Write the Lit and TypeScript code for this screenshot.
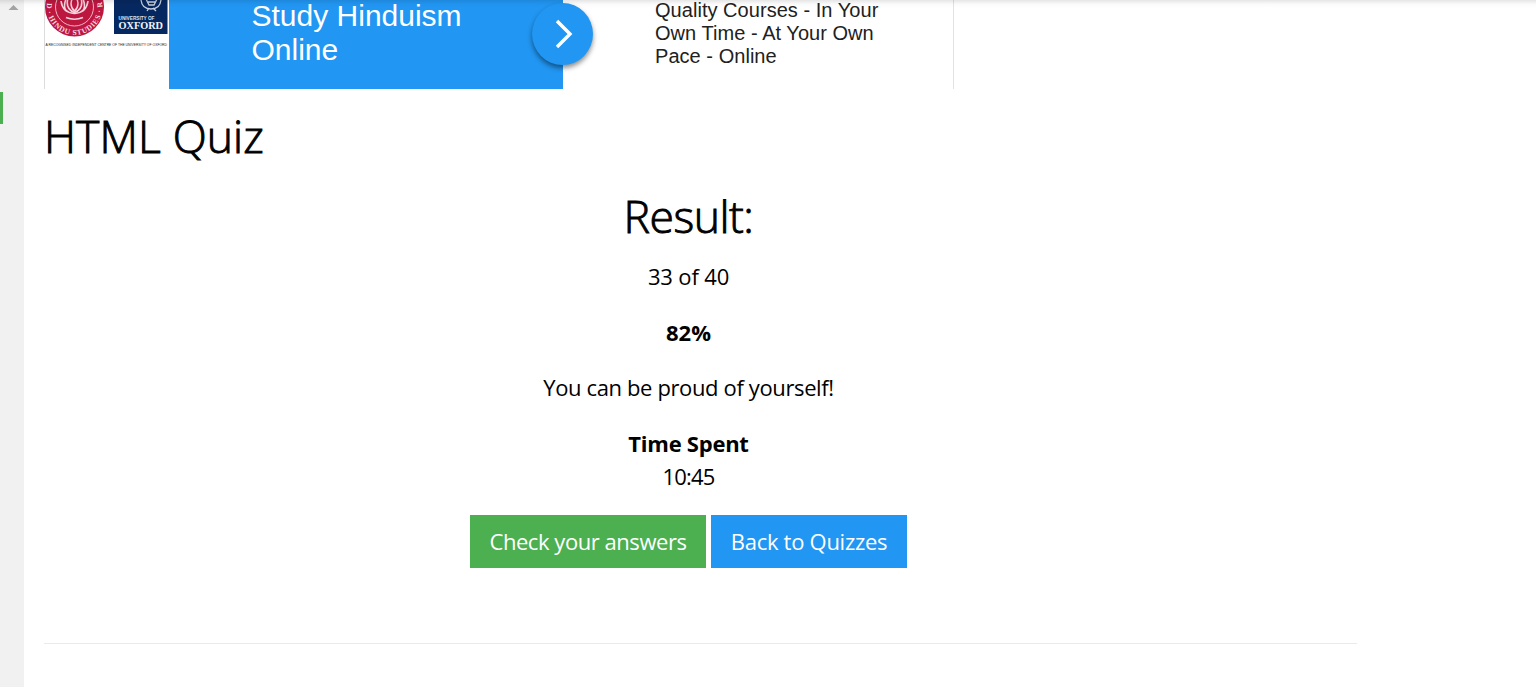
import { LitElement, html, css } from "lit";
import { customElement } from "lit/decorators.js";

@customElement("quiz-banner")
class QuizBanner extends LitElement {
  static styles = css`
    :host { display: flex; width: 910px; height: 89px; box-sizing: border-box; border-left: 1px solid #dcdcdc; border-right: 1px solid #e2e2e2; font-family: "Liberation Sans", Arial, sans-serif; overflow: visible; }
    .logos { width: 124px; height: 89px; flex: none; overflow: hidden; display: block; }
    .headline { position: relative; flex: none; width: 394px; height: 89px; box-sizing: border-box; padding-left: 82.500px; background: #2196f3; color: #fff; font-size: 30px; line-height: 34px; display: flex; flex-direction: column; justify-content: flex-start; }
    .headline span { display: block; white-space: nowrap; }
    .headline span:first-child { margin-top: -1px; }
    .go { position: absolute; left: 363px; top: 3px; width: 61px; height: 62px; border-radius: 50%; background: #2196f3; box-shadow: 0 3px 5px rgba(0, 0, 0, 0.45); }
    .go svg { display: block; width: 61px; height: 62px; }
    .copy { margin-top: -1px; padding-left: 92px; font-size: 20px; line-height: 23px; letter-spacing: 0.04px; color: #212121; white-space: nowrap; }
  `;
  render() {
    return html`
      <svg class="logos" viewBox="45 0 124 89">
        <circle cx="74.5" cy="7" r="29.5" fill="#bd1740" />
        <circle cx="74.5" cy="7" r="19" fill="none" stroke="#eeb5c3" stroke-width="1" />
        <g fill="none" stroke="#f6d5dd" stroke-width="1.600">
          <path d="M74.500 -5C70 1 70 7 74.500 11C79 7 79 1 74.500 -5Z" />
          <path d="M68 -2C66 5 68 10 74.500 12.500C81 10 83 5 81 -2" />
          <path d="M61 1C62 9 67 13 74.500 13.500C82 13 87 9 88 1" />
          <path d="M66 -1C64 4 64 8 66 11M83 -1C85 4 85 8 83 11" />
          <path d="M66 17.500Q74.500 21 83 17.500" />
        </g>
        <path id="ring" d="M47.300 2A27.700 27.700 0 1 0 101.700 2" fill="none" />
        <text font-family="Liberation Serif" font-size="7.500" font-weight="700" fill="#f8dce3" letter-spacing="0.7"><textPath href="#ring" startOffset="1">D · HINDU STUDIES · R</textPath></text>
        <rect x="114" y="-10" width="53.500" height="44" fill="#062860" />
        <g fill="none" stroke="#c7d0df" stroke-width="1.300">
          <path d="M141 0Q142 9 151 9Q160 9 161 0" />
          <path d="M146 -1L149 5H154L157 -1M148 2H155" />
          <path d="M149 8L147 11M153 8L156 11" />
        </g>
        <text x="118.500" y="19.500" font-family="Liberation Sans" font-size="5.300" font-weight="700" fill="#dce2ec" textLength="36" lengthAdjust="spacingAndGlyphs">UNIVERSITY OF</text>
        <text x="118.500" y="29" font-family="Liberation Serif" font-size="11" font-weight="700" fill="#f3f5fa" textLength="44.500" lengthAdjust="spacingAndGlyphs">OXFORD</text>
        <text x="45.500" y="45.700" font-family="Liberation Sans" font-size="4.400" fill="#222" textLength="121.500" lengthAdjust="spacingAndGlyphs">A RECOGNISED INDEPENDENT CENTRE OF THE UNIVERSITY OF OXFORD</text>
      </svg>
      <div class="headline">
        <span>Study Hinduism</span><span>Online</span>
        <div class="go"><svg viewBox="0 0 61 62"><path d="M25 18L38 31L25 44" fill="none" stroke="#fff" stroke-width="3.400" /></svg></div>
      </div>
      <div class="copy">Quality Courses - In Your<br />Own Time - At Your Own<br />Pace - Online</div>
    `;
  }
}

@customElement("app-root")
class AppRoot extends LitElement {
  static styles = css`
    :host { display: flex; position: relative; width: 100%; height: 687px; overflow: hidden; background: #fff; color: #000; font-family: "Open Sans", "Noto Sans", sans-serif; font-size: 22px; line-height: 33.75px; }
    .shade { position: absolute; left: 0; top: 0; width: 100%; height: 8px; background: linear-gradient(rgba(0, 0, 0, 0.1), rgba(0, 0, 0, 0.06) 25%, rgba(0, 0, 0, 0.015) 55%, transparent); }
    .side { flex: none; width: 24px; background: #f1f1f1; display: flex; flex-direction: column; }
    .arrow { width: 24px; height: 92px; display: block; }
    .marker { width: 3px; height: 32px; background: #4caf50; }
    main { width: 1313px; padding-left: 20px; }
    h1, h2, p { margin: 0; font-weight: 400; white-space: nowrap; }
    h1, h2 { font-size: 44.5px; line-height: 68px; font-weight: 300; -webkit-text-stroke: 0.9px #000; }
    h1 { margin-top: 13px; letter-spacing: 0.1px; }
    h2 { letter-spacing: -0.5px; }
    .result { margin-top: 12px; padding-right: 24px; display: flex; flex-direction: column; align-items: center; }
    .score { margin-top: 10px; letter-spacing: -0.15px; }
    .gap { margin-top: 22px; }
    .praise { margin-top: 21.500px; letter-spacing: -0.37px; }
    .spent { letter-spacing: -0.25px; }
    .time { letter-spacing: -0.8px; margin-top: -0.500px; }
    b { font-weight: 700; }
    .actions { display: flex; gap: 5px; margin-top: 21px; }
    .btn { height: 53px; line-height: 53px; text-align: center; color: #fff; white-space: nowrap; }
    .check { width: 236px; background: #4caf50; letter-spacing: -0.45px; }
    .back { width: 196px; background: #2196f3; letter-spacing: -0.28px; }
    .rule { height: 1px; margin-top: 75px; background: #eaeaea; }
  `;
  render() {
    return html`
      <div class="side">
        <svg class="arrow" viewBox="0 0 24 92"><path d="M8.500 10L13.500 5L18.500 10Z" fill="#a3a3a3" /></svg>
        <div class="marker"></div>
      </div>
      <main>
        <quiz-banner></quiz-banner>
        <h1>HTML Quiz</h1>
        <section class="result">
          <h2>Result:</h2>
          <p class="score">33 of 40</p>
          <p class="gap"><b>82%</b></p>
          <p class="praise">You can be proud of yourself!</p>
          <p class="gap spent"><b>Time Spent</b></p>
          <p class="time">10:45</p>
          <div class="actions">
            <div class="btn check">Check your answers</div>
            <div class="btn back">Back to Quizzes</div>
          </div>
        </section>
        <div class="rule"></div>
      </main>
      <div class="shade"></div>
    `;
  }
}
